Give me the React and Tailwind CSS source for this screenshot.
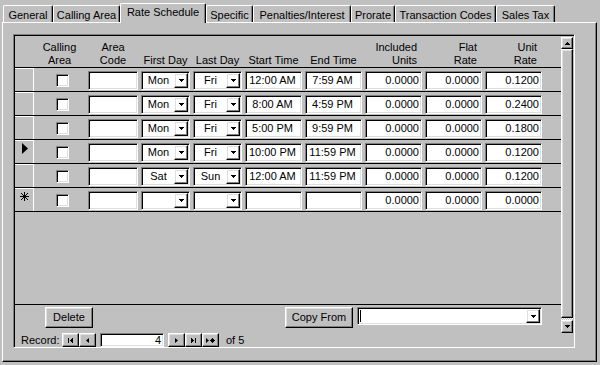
const raised =
  'border border-t-white border-l-white border-r-black border-b-black shadow-[inset_-1px_-1px_0_#808080,inset_1px_1px_0_#dfdfdf]'
const sunken =
  'border border-t-[#808080] border-l-[#808080] border-b-white border-r-white shadow-[inset_1px_1px_0_#000,inset_-1px_-1px_0_#dfdfdf] bg-white'

const tabs = [
  { label: 'General', w: 'w-[50px]' },
  { label: 'Calling Area', w: 'w-[67px]' },
  { label: 'Rate Schedule', w: 'w-[86px]', active: true },
  { label: 'Specific', w: 'w-[47px]' },
  { label: 'Penalties/Interest', w: 'w-[98px]' },
  { label: 'Prorate', w: 'w-[44px]' },
  { label: 'Transaction Codes', w: 'w-[101px]' },
  { label: 'Sales Tax', w: 'w-[59px]' },
]

const rows = [
  { first: 'Mon', last: 'Fri', start: '12:00 AM', end: '7:59 AM', inc: '0.0000', flat: '0.0000', unit: '0.1200' },
  { first: 'Mon', last: 'Fri', start: '8:00 AM', end: '4:59 PM', inc: '0.0000', flat: '0.0000', unit: '0.2400' },
  { first: 'Mon', last: 'Fri', start: '5:00 PM', end: '9:59 PM', inc: '0.0000', flat: '0.0000', unit: '0.1800' },
  { first: 'Mon', last: 'Fri', start: '10:00 PM', end: '11:59 PM', inc: '0.0000', flat: '0.0000', unit: '0.1200', current: true },
  { first: 'Sat', last: 'Sun', start: '12:00 AM', end: '11:59 PM', inc: '0.0000', flat: '0.0000', unit: '0.1200' },
  { first: '', last: '', start: '', end: '', inc: '0.0000', flat: '0.0000', unit: '0.0000', isNew: true },
]

const DownArrow = () => (
  <svg width="5" height="3" shapeRendering="crispEdges">
    <rect x="0" y="0" width="5" height="1" />
    <rect x="1" y="1" width="3" height="1" />
    <rect x="2" y="2" width="1" height="1" />
  </svg>
)

const UpArrow = () => (
  <svg width="5" height="3" shapeRendering="crispEdges">
    <rect x="2" y="0" width="1" height="1" />
    <rect x="1" y="1" width="3" height="1" />
    <rect x="0" y="2" width="5" height="1" />
  </svg>
)

const Asterisk = ({ size = 9 }) => {
  const c = (size - 1) / 2
  return (
    <svg width={size} height={size} stroke="black" strokeWidth="1" shapeRendering="crispEdges">
      <line x1={c + 0.5} y1="0" x2={c + 0.5} y2={size} />
      <line x1="0" y1={c + 0.5} x2={size} y2={c + 0.5} />
      <line x1="1" y1="1" x2={size - 1} y2={size - 1} />
      <line x1={size - 1} y1="1" x2="1" y2={size - 1} />
    </svg>
  )
}

function Tab({ label, w, active }) {
  if (active) {
    return (
      <div
        className={`relative z-10 -mb-px h-[20px] ${w} rounded-t-[2px] border-t border-l border-r border-t-white border-l-white border-r-black bg-[#c0c0c0] pt-[1px] text-center leading-[14px] whitespace-nowrap shadow-[inset_-1px_0_0_#808080]`}
      >
        {label}
      </div>
    )
  }
  return (
    <div
      className={`h-[17px] ${w} rounded-t-[2px] border-t border-l border-r border-t-white border-l-white border-r-black pt-[2px] text-center leading-[14px] whitespace-nowrap shadow-[inset_-1px_0_0_#808080]`}
    >
      {label}
    </div>
  )
}

function Combo({ value }) {
  return (
    <div className={`${sunken} ml-[3px] mt-[3px] flex h-[19px] w-[49px] p-[1px]`}>
      <span className="flex-1 text-center leading-[15px]">{value}</span>
      <div className={`${raised} flex h-full w-[14px] items-center justify-center`}>
        <DownArrow />
      </div>
    </div>
  )
}

function Field({ value, w = 'w-[57px]', align = 'justify-center' }) {
  return (
    <div className={`${sunken} ml-[3px] mt-[3px] flex h-[19px] ${w} items-center ${align} pr-[2px] leading-[15px] whitespace-nowrap`}>
      {value}
    </div>
  )
}

function Row({ row }) {
  return (
    <div className="flex h-[24px] items-start border-b border-black">
      <div className="flex h-full w-[19px] shrink-0 border-t border-r border-t-white border-r-white">
        {row.current && (
          <svg className="ml-[7px] mt-[2px]" width="6" height="11">
            <polygon points="0,0 6,5.5 0,11" fill="black" />
          </svg>
        )}
        {row.isNew && (
          <div className="ml-[5px] mt-[3px]">
            <Asterisk />
          </div>
        )}
      </div>
      <div className={`${sunken} ml-[22px] mt-[6px] h-[13px] w-[13px] shrink-0`} />
      <div className={`${sunken} ml-[19px] mt-[3px] h-[19px] w-[50px] shrink-0`} />
      <Combo value={row.first} />
      <Combo value={row.last} />
      <Field value={row.start} />
      <Field value={row.end} />
      <Field value={row.inc} align="justify-end" />
      <Field value={row.flat} align="justify-end" />
      <Field value={row.unit} align="justify-end" />
    </div>
  )
}

function Header() {
  return (
    <div className="flex h-[32px] items-end border-b border-black leading-[13px]">
      <div className="w-[19px] shrink-0" />
      <div className="w-[51px] text-center">
        Calling
        <br />
        Area
      </div>
      <div className="ml-[3px] w-[50px] text-center">
        Area
        <br />
        Code
      </div>
      <div className="ml-[3px] w-[49px] text-center whitespace-nowrap">First Day</div>
      <div className="ml-[3px] w-[49px] text-center whitespace-nowrap">Last Day</div>
      <div className="ml-[3px] w-[57px] text-center whitespace-nowrap">Start Time</div>
      <div className="ml-[3px] w-[57px] text-center whitespace-nowrap">End Time</div>
      <div className="ml-[3px] w-[57px] pr-[5px] text-right">
        Included
        <br />
        Units
      </div>
      <div className="ml-[3px] w-[57px] pr-[5px] text-right">
        Flat
        <br />
        Rate
      </div>
      <div className="ml-[3px] w-[57px] pr-[5px] text-right">
        Unit
        <br />
        Rate
      </div>
    </div>
  )
}

function Scrollbar() {
  return (
    <div className="flex w-[12px] flex-col">
      <div className={`${raised} mt-[1px] flex h-[12px] items-center justify-center`}>
        <UpArrow />
      </div>
      <div className={`${raised} h-[269px]`} />
      <div className="h-[2px] bg-[repeating-conic-gradient(#fff_0_25%,#c0c0c0_0_50%)] bg-[length:2px_2px]" />
      <div className={`${raised} flex h-[13px] items-center justify-center`}>
        <DownArrow />
      </div>
    </div>
  )
}

function NavButton({ children }) {
  return <div className={`${raised} flex h-[14px] w-[17px] items-center justify-center`}>{children}</div>
}

function NavBar() {
  return (
    <div className="flex h-[14px] items-center pl-[6px] leading-[14px]">
      <span className="w-[41px]">Record:</span>
      <NavButton>
        <svg width="5" height="5" shapeRendering="crispEdges">
          <rect x="0" y="0" width="1" height="5" />
          <polygon points="5,0 2,2.5 5,5" />
        </svg>
      </NavButton>
      <NavButton>
        <svg width="3" height="5">
          <polygon points="3,0 0,2.5 3,5" />
        </svg>
      </NavButton>
      <div className={`${sunken} ml-[4px] flex h-[14px] w-[64px] items-center justify-end pr-[2px] leading-[12px]`}>4</div>
      <div className="ml-[4px] flex">
        <NavButton>
          <svg width="3" height="5">
            <polygon points="0,0 3,2.5 0,5" />
          </svg>
        </NavButton>
        <NavButton>
          <svg width="5" height="5" shapeRendering="crispEdges">
            <polygon points="0,0 3,2.5 0,5" />
            <rect x="4" y="0" width="1" height="5" />
          </svg>
        </NavButton>
        <NavButton>
          <div className="flex items-center gap-[1px]">
            <svg width="3" height="5">
              <polygon points="0,0 3,2.5 0,5" />
            </svg>
            <Asterisk size={5} />
          </div>
        </NavButton>
      </div>
      <span className="ml-[7px]">of 5</span>
    </div>
  )
}

function Footer() {
  return (
    <div className="flex h-[28px] items-start">
      <div className={`${raised} ml-[30px] mt-[2px] flex h-[21px] w-[48px] items-center justify-center`}>Delete</div>
      <div className={`${raised} ml-[192px] mt-[2px] flex h-[21px] w-[68px] items-center justify-center whitespace-nowrap`}>
        Copy From
      </div>
      <div className={`${sunken} ml-[4px] mt-[2px] flex h-[18px] w-[185px] p-[1px]`}>
        <span className="ml-[1px] my-[1px] w-[1px] bg-black" />
        <span className="flex-1" />
        <div className={`${raised} flex h-full w-[14px] items-center justify-center`}>
          <DownArrow />
        </div>
      </div>
    </div>
  )
}

export default function App() {
  return (
    <div className="h-[365px] w-[600px] overflow-hidden bg-[#c0c0c0] font-['Liberation_Sans',Arial,sans-serif] text-[11px] text-black">
      <div className="flex h-[22px] items-end pl-[3px]">
        {tabs.map((t) => (
          <Tab key={t.label} {...t} />
        ))}
      </div>
      <div className="ml-[2px] h-[340px] w-[595px] border border-t-white border-l-white border-r-black border-b-black shadow-[inset_-1px_-1px_0_#808080]">
        <div className="ml-[10px] mt-[11px] h-[314px] w-[562px] border border-t-[#808080] border-l-[#808080] border-b-white border-r-white pl-[1px] pt-[1px] shadow-[inset_1px_1px_0_#000]">
          <div className="flex">
            <div className="w-[546px]">
              <Header />
              {rows.map((r, i) => (
                <Row key={i} row={r} />
              ))}
              <div className="h-[93px] border-b border-black" />
              <Footer />
            </div>
            <Scrollbar />
          </div>
          <NavBar />
        </div>
      </div>
    </div>
  )
}
